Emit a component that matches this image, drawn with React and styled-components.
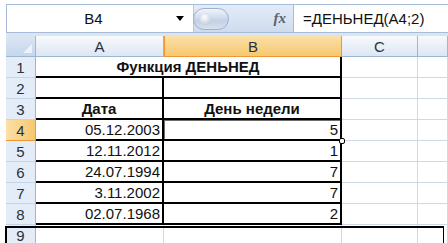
import React from 'react';
import styled, { createGlobalStyle } from 'styled-components';

const Global = createGlobalStyle`
  body {
    margin: 0;
    background: #fff;
    font-family: "Liberation Sans", Arial, sans-serif;
  }
`;

const Window = styled.div`
  position: relative;
  width: 448px;
  height: 243px;
  overflow: hidden;
  box-sizing: border-box;
  padding: 4px 0 0 6px;
  background: #fff;
`;

const FormulaBar = styled.div`
  display: flex;
  height: 29px;
  box-sizing: border-box;
  border-top: 1px solid #a7bcd9;
  border-left: 1px solid #a7bcd9;
  border-bottom: 1px solid #a7bcd9;
`;

const NameBox = styled.div`
  display: flex;
  align-items: center;
  width: 186px;
  background: #fff;
  font-size: 15px;
  color: #111;
`;

const NameText = styled.div`
  flex: 1;
  text-align: center;
  padding-left: 4px;
`;

const Arrow = styled.div`
  width: 0;
  height: 0;
  margin-right: 9px;
  border-left: 4px solid transparent;
  border-right: 4px solid transparent;
  border-top: 5px solid #000;
`;

const Middle = styled.div`
  display: flex;
  align-items: center;
  width: 99px;
  background: linear-gradient(#e3ecf8, #cfdcee);
  border-left: 1px solid #b6c8e0;
`;

const Pill = styled.div`
  position: relative;
  width: 36px;
  height: 22px;
  margin-left: -1px;
  border-radius: 11px;
  border: 1px solid #9fb1cc;
  box-sizing: border-box;
  background: linear-gradient(#f1f5fb, #c3d1e6 60%, #d6e1f0);
`;

const Knob = styled.div`
  position: absolute;
  left: 6px;
  top: 4px;
  width: 11px;
  height: 12px;
  border-radius: 50%;
  background: radial-gradient(circle at 40% 35%, #ffffff, #c9d2de 70%, #aeb9c8);
`;

const Fx = styled.div`
  margin-left: auto;
  margin-right: 7px;
  font-family: "Liberation Serif", "Times New Roman", serif;
  font-style: italic;
  font-weight: bold;
  font-size: 15px;
  color: #5a6270;
`;

const FormulaInput = styled.div`
  flex: 1;
  display: flex;
  align-items: center;
  padding-left: 9px;
  background: #fff;
  border-left: 1px solid #a7bcd9;
  font-size: 15px;
  color: #111;
`;

const Band = styled.div`
  height: 3px;
  background: #dbe5f1;
`;

const Grid = styled.div`
  display: grid;
  grid-template-columns: 30px 128px 178px 76px 1fr;
  grid-template-rows: 21px;
  grid-auto-rows: 21px;
`;

const Corner = styled.div`
  position: relative;
  box-sizing: border-box;
  background: linear-gradient(#dbe6f4, #c6d6ec);
  border-right: 1px solid #9eb6ce;
  border-bottom: 1px solid #9eb6ce;
  &::after {
    content: '';
    position: absolute;
    right: 3px;
    bottom: 3px;
    border-left: 9px solid transparent;
    border-bottom: 9px solid #eef3fa;
  }
`;

const ColHead = styled.div`
  display: flex;
  align-items: center;
  justify-content: center;
  box-sizing: border-box;
  font-size: 15px;
  color: #27313e;
  background: ${(p) =>
    p.$active
      ? 'linear-gradient(#fbe0a8, #f6c86f)'
      : 'linear-gradient(#f7fafd, #dde6f2)'};
  border-right: 1px solid ${(p) => (p.$active ? '#f29536' : '#9eb6ce')};
  border-bottom: 1px solid ${(p) => (p.$active ? '#f29536' : '#9eb6ce')};
  border-left: ${(p) => (p.$active ? '1px solid #f29536' : 'none')};
`;

const RowHead = styled.div`
  display: flex;
  align-items: center;
  justify-content: center;
  box-sizing: border-box;
  font-size: 15px;
  color: #27313e;
  background: ${(p) =>
    p.$active ? 'linear-gradient(90deg, #fbe0a8, #f6c86f)' : '#e4ecf7'};
  border-right: 1px solid ${(p) => (p.$active ? '#f29536' : '#9eb6ce')};
  border-bottom: 1px solid ${(p) => (p.$active ? '#f29536' : '#c5d5e9')};
`;

const Cell = styled.div`
  position: relative;
  display: flex;
  align-items: center;
  justify-content: ${(p) => (p.$center ? 'center' : 'flex-end')};
  grid-column: ${(p) => (p.$span ? `span ${p.$span}` : 'auto')};
  box-sizing: border-box;
  padding: 0 2px;
  font-size: 15px;
  font-weight: ${(p) => (p.$bold ? 'bold' : 'normal')};
  color: #111;
  white-space: nowrap;
  border-right: ${(p) => (p.$right ? '2px solid #000' : '1px solid #d0d7e5')};
  border-bottom: ${(p) => (p.$bottom ? '2px solid #000' : '1px solid #d0d7e5')};
  box-shadow: ${(p) => (p.$selected ? 'inset 1px 1px 0 #6d6d6d' : 'none')};
`;

const Handle = styled.div`
  position: absolute;
  right: -5px;
  bottom: -5px;
  width: 6px;
  height: 6px;
  box-sizing: border-box;
  border: 1px solid #000;
  border-radius: 2px;
  background: #fff;
  z-index: 2;
`;

const Frame = styled.div`
  position: absolute;
  left: 5px;
  top: 226px;
  width: 439px;
  height: 40px;
  box-sizing: border-box;
  border: 2px solid #000;
  border-right-width: 1px;
  pointer-events: none;
`;

const dates = [
  ['05.12.2003', '5'],
  ['12.11.2012', '1'],
  ['24.07.1994', '7'],
  ['3.11.2002', '7'],
  ['02.07.1968', '2'],
];

function Blank() {
  return (
    <>
      <Cell />
      <Cell />
    </>
  );
}

export default function App() {
  return (
    <Window>
      <Global />
      <FormulaBar>
        <NameBox>
          <NameText>B4</NameText>
          <Arrow />
        </NameBox>
        <Middle>
          <Pill>
            <Knob />
          </Pill>
          <Fx>fx</Fx>
        </Middle>
        <FormulaInput>=ДЕНЬНЕД(A4;2)</FormulaInput>
      </FormulaBar>
      <Band />
      <Grid>
        <Corner />
        <ColHead>A</ColHead>
        <ColHead $active>B</ColHead>
        <ColHead>C</ColHead>
        <ColHead />

        <RowHead>1</RowHead>
        <Cell $span={2} $center $bold $bottom $right>
          Функция ДЕНЬНЕД
        </Cell>
        <Blank />

        <RowHead>2</RowHead>
        <Cell $bottom $right />
        <Cell $bottom $right />
        <Blank />

        <RowHead>3</RowHead>
        <Cell $center $bold $bottom $right>
          Дата
        </Cell>
        <Cell $center $bold $bottom $right>
          День недели
        </Cell>
        <Blank />

        {dates.map(([d, n], i) => (
          <React.Fragment key={d}>
            <RowHead $active={i === 0}>{i + 4}</RowHead>
            <Cell $bottom $right>
              {d}
            </Cell>
            <Cell $bottom $right $selected={i === 0}>
              {n}
              {i === 0 && <Handle />}
            </Cell>
            <Blank />
          </React.Fragment>
        ))}

        <RowHead>9</RowHead>
        <Cell />
        <Cell />
        <Blank />
      </Grid>
      <Frame />
    </Window>
  );
}
